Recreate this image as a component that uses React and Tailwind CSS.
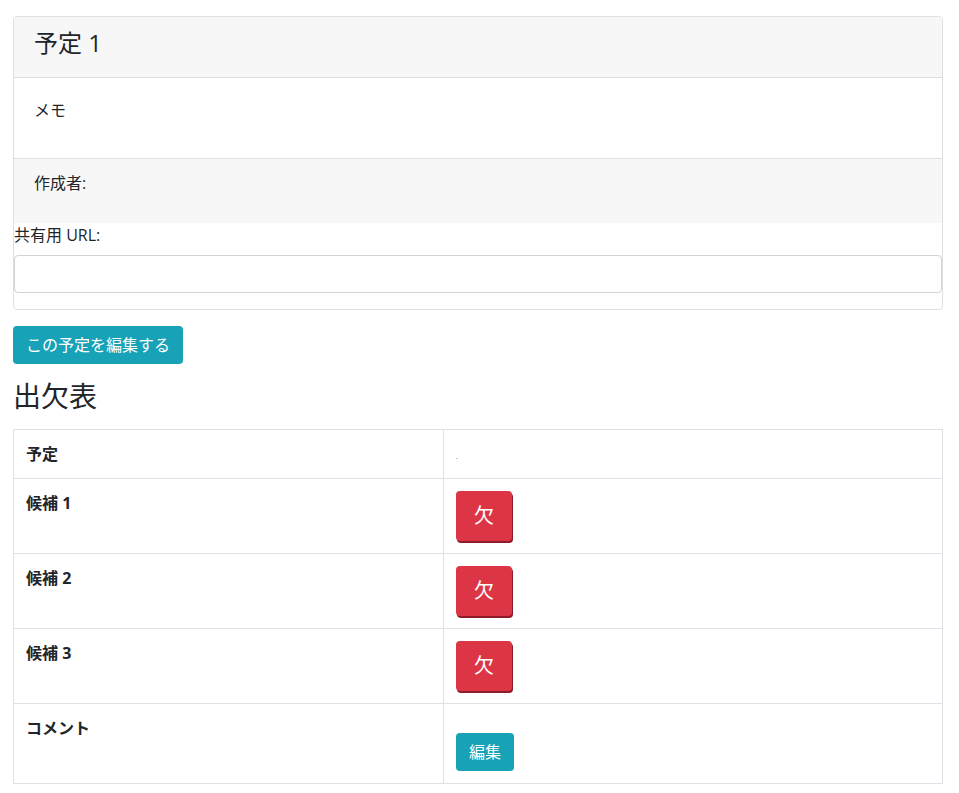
import React from 'react';

const font = { fontFamily: '"Open Sans", "Noto Sans CJK JP", sans-serif' };

const candidates = ['候補 1', '候補 2', '候補 3'];

const App = () => {
  return (
    <div className="bg-white text-[#212529] text-base leading-6 pl-[13px] pr-[16px] pt-[16px] pb-[10px]" style={font}>
      <div className="border border-[#dfdfdf] rounded-[4px] w-[930px]">
        <div className="bg-[#f7f7f7] border-b border-[#dfdfdf] px-5 pt-3 pb-[11px] rounded-t-[4px]">
          <h4 className="text-2xl leading-[1.2] mb-2">予定 1</h4>
        </div>
        <div className="px-5 py-5 border-b border-[#dfdfdf]">
          <p className="mb-4">メモ</p>
        </div>
        <div className="bg-[#f7f7f7] px-5 py-3">
          <p className="mb-4">作成者:</p>
        </div>
        <label className="block mb-2">共有用 URL:</label>
        <input
          type="text"
          readOnly
          className="block w-full h-[38px] border border-[#ced4da] rounded-[4px] mb-4 px-3"
        />
      </div>

      <div className="mt-4 mb-4">
        <button className="bg-[#17a2b8] text-white rounded-[4px] px-[13px] h-[38px] leading-6">
          この予定を編集する
        </button>
      </div>

      <h3 className="text-[28px] leading-[1.2] mb-4 mt-[7px]">出欠表</h3>

      <table className="w-[930px] border-collapse">
        <tbody>
          <tr>
            <th className="border border-[#dee2e6] p-3 text-left font-bold w-[430px] align-top h-[49px]">予定</th>
            <td className="border border-[#dee2e6] p-3 align-top">
              <span className="block text-[7px] leading-none mt-[11px] text-[#8a4b1a]">.</span>
            </td>
          </tr>
          {candidates.map((c) => (
            <tr key={c}>
              <th className="border border-[#dee2e6] p-3 text-left font-bold align-top">{c}</th>
              <td className="border border-[#dee2e6] p-3 align-top">
                <button className="bg-[#dc3545] text-white text-xl rounded-[4px] w-[56px] h-[50px] flex items-center justify-center shadow-[1px_2px_0_#8e1b28]">
                  欠
                </button>
              </td>
            </tr>
          ))}
          <tr>
            <th className="border border-[#dee2e6] p-3 text-left font-bold align-top h-[79px]">コメント</th>
            <td className="border border-[#dee2e6] p-3 align-top">
              <button className="block mt-[17px] bg-[#17a2b8] text-white rounded-[4px] w-[58px] h-[38px] leading-6">
                編集
              </button>
            </td>
          </tr>
        </tbody>
      </table>
    </div>
  );
};

export default App;
